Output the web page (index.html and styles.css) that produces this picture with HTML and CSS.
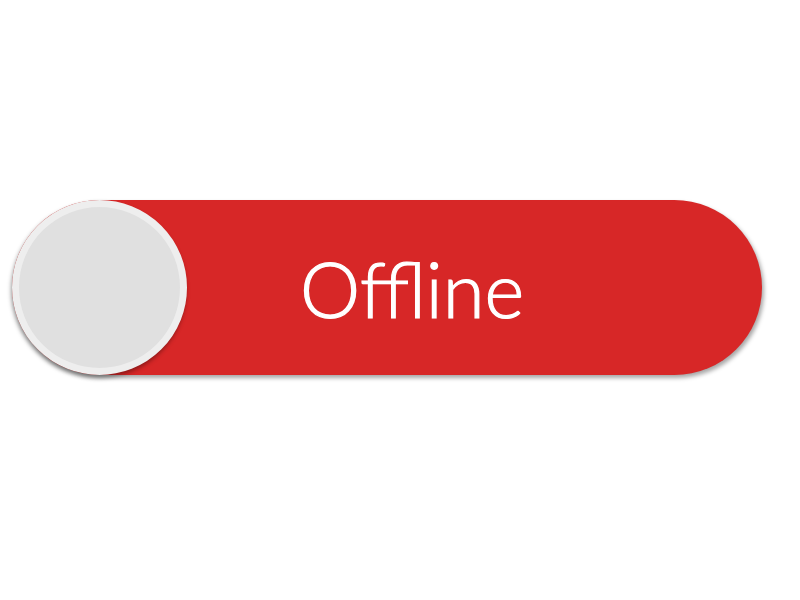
FILE: index.html
```
<!DOCTYPE html>
<html>
<head>
<meta charset="utf-8">
<link rel="stylesheet" href="styles.css">
</head>
<body>
<div class="stage">
  <div class="toggle">
    <div class="knob"></div>
    <span class="label">Offline</span>
  </div>
</div>
</body>
</html>
```
FILE: styles.css
```
html, body {
  margin: 0;
  padding: 0;
  background: #ffffff;
}
.stage {
  width: 800px;
  height: 600px;
  padding: 200px 0 0 12px;
  box-sizing: border-box;
}
.toggle {
  position: relative;
  width: 750px;
  height: 175px;
  border-radius: 88px;
  background: #d72727;
  box-shadow: 2px 3px 4px rgba(0,0,0,0.35);
  display: flex;
  align-items: center;
  justify-content: center;
  padding-left: 50px;
  box-sizing: border-box;
}
.knob {
  position: absolute;
  left: 0;
  top: 0;
  width: 175px;
  height: 175px;
  border-radius: 50%;
  background: #e0e0e0;
  border: 7px solid #eeeeee;
  box-sizing: border-box;
  box-shadow: -1px 3px 4px rgba(0,0,0,0.35);
}
.label {
  font-family: "Lato", sans-serif;
  font-weight: 300;
  font-size: 76px;
  color: #ffffff;
  -webkit-text-stroke: 1.2px #ffffff;
  line-height: 1;
  margin-top: 2px;
}
```
